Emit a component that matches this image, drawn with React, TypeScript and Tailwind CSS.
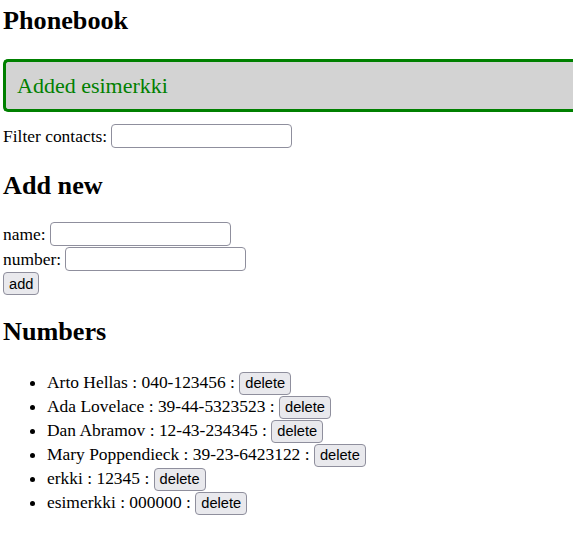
import { useState } from 'react';

type Person = { id: number; name: string; number: string };

const initialPersons: Person[] = [
  { id: 1, name: 'Arto Hellas', number: '040-123456' },
  { id: 2, name: 'Ada Lovelace', number: '39-44-5323523' },
  { id: 3, name: 'Dan Abramov', number: '12-43-234345' },
  { id: 4, name: 'Mary Poppendieck', number: '39-23-6423122' },
  { id: 5, name: 'erkki', number: '12345' },
  { id: 6, name: 'esimerkki', number: '000000' },
];

const inputClass =
  "h-[24px] w-[181px] border border-[#8f8f9d] rounded-[4px] bg-white px-[2px] text-[14.67px] font-['Liberation_Sans',Arial,sans-serif]";
const buttonClass =
  "inline-block border border-[#8f8f9d] rounded-[4px] bg-[#e9e9ed] px-[5px] py-[2.5px] text-[14.67px] leading-[normal] text-black font-['Liberation_Sans',Arial,sans-serif]";

function Notification({ message }: { message: string | null }) {
  if (message === null) return null;
  return (
    <div className="mb-[11px] border-[3px] border-r-0 border-[#008000] rounded-l-[5px] bg-[#d3d3d3] px-[11px] py-[11px] text-[22px] leading-[25px] text-[#008000]">
      {message}
    </div>
  );
}

export default function App() {
  const [persons, setPersons] = useState<Person[]>(initialPersons);
  const [filter, setFilter] = useState('');
  const [newName, setNewName] = useState('');
  const [newNumber, setNewNumber] = useState('');
  const [message] = useState<string | null>('Added esimerkki');

  const shown = persons.filter((p) => p.name.toLowerCase().includes(filter.toLowerCase()));

  const addPerson = (e: React.FormEvent) => {
    e.preventDefault();
    if (!newName) return;
    setPersons(persons.concat({ id: Date.now(), name: newName, number: newNumber }));
    setNewName('');
    setNewNumber('');
  };

  return (
    <div className="min-h-screen bg-white pl-[3px] text-black text-[17.45px] font-['Liberation_Serif','Times_New_Roman',serif]">
      <h2 className="mt-[6px] mb-[23px] text-[26.2px] leading-[30px] font-bold">Phonebook</h2>

      <Notification message={message} />

      <div className="flex h-[26px] items-center gap-[4px]">
        <span>Filter contacts:</span>
        <input className={inputClass} value={filter} onChange={(e) => setFilter(e.target.value)} />
      </div>

      <h2 className="mt-[22px] mb-[21px] text-[26.2px] leading-[30px] font-bold">Add new</h2>

      <form onSubmit={addPerson} className="flex flex-col items-start gap-[1px]">
        <div className="flex h-[24px] items-center gap-[4px]">
          <span>name:</span>
          <input className={inputClass} value={newName} onChange={(e) => setNewName(e.target.value)} />
        </div>
        <div className="flex h-[24px] items-center gap-[4px]">
          <span>number:</span>
          <input className={inputClass} value={newNumber} onChange={(e) => setNewNumber(e.target.value)} />
        </div>
        <button type="submit" className={buttonClass}>add</button>
      </form>

      <h2 className="mt-[22px] mb-[22px] text-[26.2px] leading-[30px] font-bold">Numbers</h2>

      <ul className="list-disc pl-[44px]">
        {shown.map((p) => (
          <li key={p.id} className="h-[24px]">
            {p.name} : {p.number} :{' '}
            <button
              className={buttonClass}
              onClick={() => setPersons(persons.filter((x) => x.id !== p.id))}
            >
              delete
            </button>
          </li>
        ))}
      </ul>
    </div>
  );
}
